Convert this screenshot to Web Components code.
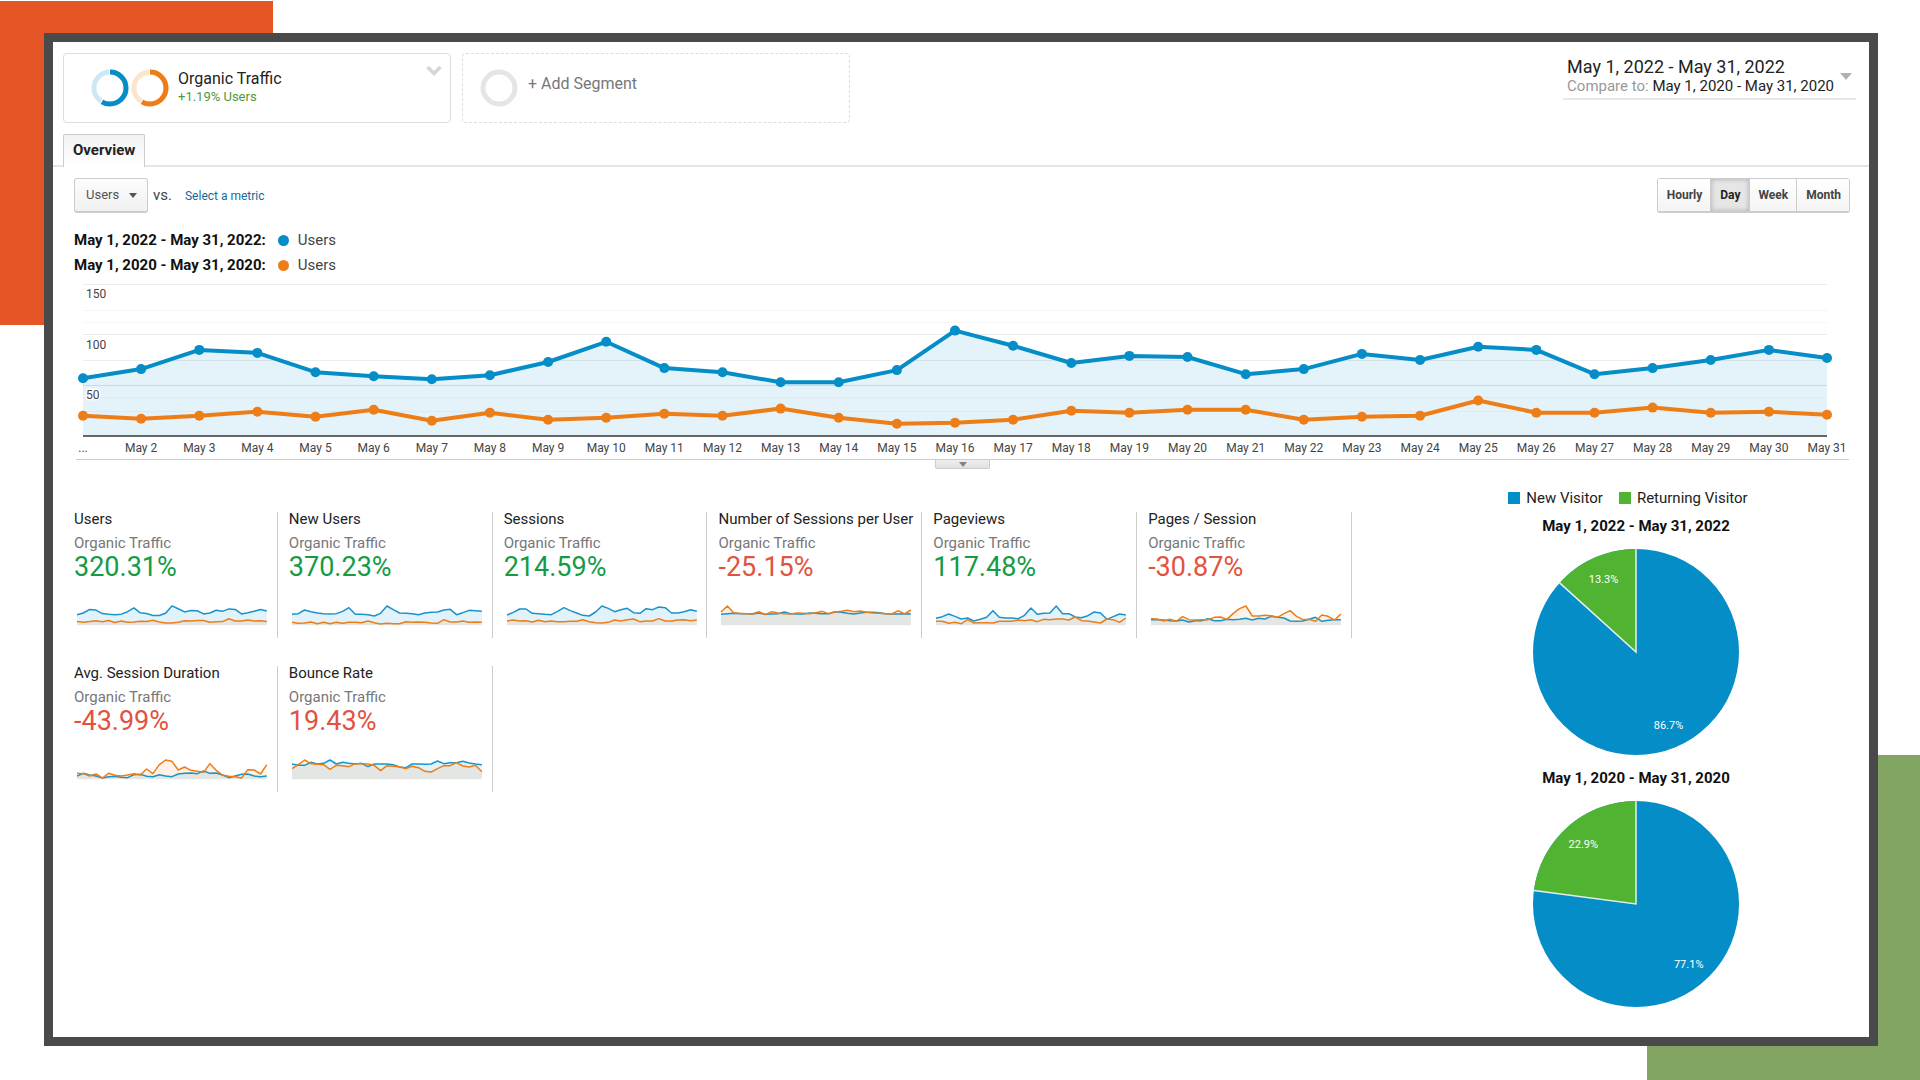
<!DOCTYPE html>
<html lang="en">
<head>
<meta charset="utf-8">
<meta name="viewport" content="width=device-width, initial-scale=1">
<title>Audience Overview</title>
<style>
  body { margin: 0; background: #fff; font-family: Roboto, "Liberation Sans", sans-serif; color: #222; }
</style>
</head>
<body>
<report-stage>
  <report-header>
    <segment-card name="Organic Traffic" detail="+1.19% Users"></segment-card>
    <add-segment></add-segment>
    <date-range slot="end" current="May 1, 2022 - May 31, 2022" previous="May 1, 2020 - May 31, 2020"></date-range>
  </report-header>
  <tab-bar label="Overview"></tab-bar>
  <metric-controls></metric-controls>
  <series-legend></series-legend>
  <trend-chart></trend-chart>
  <report-body>
    <metric-grid></metric-grid>
    <visitor-split slot="side"></visitor-split>
  </report-body>
</report-stage>

<script>
const BLUE = '#058dc7', ORANGE = '#ed7e17', GREEN = '#50b432';

const users2022 = [57,66,85,82,63,59,56,60,73,93,67,63,53,53,65,104,89,72,79,78,61,66,81,75,88,85,61,67,75,85,77];
const users2020 = [20,17,20,24,19,26,15,23,16,18,22,20,27,18,12,13,16,25,23,26,26,16,19,20,35,23,23,28,23,24,21];

// Sparkline series are levels counted down from the top; floor is the level of the zero line.
const metrics = [
  { name: 'Users', value: '320.31%', good: true, floor: 0,
    a: users2022.map(v => -v * 0.56), b: users2020.map(v => -v * 0.56) },
  { name: 'New Users', value: '370.23%', good: true, floor: 408,
    a: [375,373,362,367,371,373,374,373,366,355,375,375,376,380,372,350,361,371,372,373,376,371,369,368,362,360,376,370,363,364,366],
    b: [399,402,401,398,403,399,403,399,402,399,399,400,395,400,404,402,403,403,397,399,398,399,401,402,391,398,398,395,399,398,399] },
  { name: 'Sessions', value: '214.59%', good: true, floor: 408,
    a: [377,369,359,359,372,373,375,376,366,355,364,371,378,380,368,350,357,367,361,357,370,372,358,361,353,355,371,371,367,361,366],
    b: [395,392,395,394,398,393,397,395,397,397,396,396,391,397,400,401,399,392,395,391,389,397,395,395,388,395,395,392,391,394,392] },
  { name: 'Number of Sessions per User', value: '-25.15%', good: false, floor: 408,
    a: [375,373,372,373,373,374,371,375,374,373,368,373,374,374,371,372,373,373,367,369,372,374,371,369,369,370,373,374,374,373,374],
    b: [368,350,370,372,373,373,367,376,367,371,373,374,371,372,373,370,366,373,368,366,363,367,365,369,371,372,373,374,364,374,362] },
  { name: 'Pageviews', value: '117.48%', good: true, floor: 408,
    a: [387,382,374,381,389,386,395,390,384,364,384,386,386,388,378,356,375,372,371,350,373,373,383,385,379,368,371,390,382,374,377],
    b: [396,396,402,399,403,391,401,400,400,401,396,396,396,392,394,391,397,390,391,389,389,392,383,394,395,398,401,389,391,399,386] },
  { name: 'Pages / Session', value: '-30.87%', good: false, floor: 408,
    a: [391,391,392,394,395,392,398,394,394,388,394,394,390,391,390,387,392,387,389,381,384,386,395,396,395,390,384,396,393,391,391],
    b: [388,389,395,390,396,382,391,392,391,391,384,383,390,372,358,350,380,380,378,379,384,373,364,381,391,390,396,377,381,392,374] },
  { name: 'Avg. Session Duration', value: '-43.99%', good: false, floor: 870,
    a: [860,852,857,860,866,862,861,864,865,856,855,861,862,856,860,862,854,852,851,853,845,852,851,857,865,860,855,854,860,862,860],
    b: [852,853,860,854,866,852,858,860,857,853,857,839,853,826,812,816,842,833,843,846,849,823,843,857,861,862,866,841,842,854,826] },
  { name: 'Bounce Rate', value: '19.43%', good: false, floor: 870,
    a: [824,828,828,819,824,822,812,824,819,822,824,822,832,824,824,824,826,833,835,824,824,825,824,815,823,820,820,816,821,824,826],
    b: [838,826,812,823,825,826,840,828,829,832,823,823,824,828,844,829,831,832,838,831,835,846,848,838,829,829,820,830,833,828,847] }
];

class Base extends HTMLElement {
  connectedCallback() {
    if (!this.shadowRoot) this.attachShadow({ mode: 'open' }).innerHTML = this.view();
    this.ready();
  }
  ready() {}
}

customElements.define('report-stage', class extends Base {
  view() { return `
    <style>
      :host { display: flow-root; min-height: 100vh; box-sizing: border-box;
        background:
          linear-gradient(#e65525, #e65525) 0 1px / 273px 324px no-repeat,
          linear-gradient(#83a563, #83a563) 100% 100% / 273px 325px no-repeat,
          #fff; }
      main { margin: 33px 42px 34px 44px; min-height: calc(100vh - 67px); box-sizing: border-box;
        border: 9px solid #4a4a4b; background: #fff; }
    </style>
    <main><slot></slot></main>`; }
});

customElements.define('report-header', class extends Base {
  view() { return `
    <style>
      :host { display: flex; justify-content: space-between; align-items: flex-start; padding: 11px 13px 11px 10px; }
      .segments { display: flex; gap: 11px; }
    </style>
    <div class="segments"><slot></slot></div>
    <slot name="end"></slot>`; }
});

const ring = (light, dark) => `
  <svg width="38" height="38" viewBox="0 0 38 38" fill="none" stroke-width="5" aria-hidden="true">
    <circle cx="19" cy="19" r="16" stroke="${light}"/>
    <circle cx="19" cy="19" r="16" stroke="${dark}" pathLength="100" stroke-dasharray="58.5 100" transform="rotate(-90 19 19)"/>
    <path d="M18.500 0v6M8 36l4-6" stroke="#fff" stroke-width="1"/>
  </svg>`;

customElements.define('segment-card', class extends Base {
  view() { return `
    <style>
      :host { display: flex; box-sizing: border-box; width: 388px; height: 70px; padding: 0 8px 0 27px;
        border: 1px solid #ddd; border-radius: 4px; align-items: center; }
      .rings { display: flex; gap: 2px; }
      .text { flex: 1; padding: 0 0 2px 9px; }
      .name { font-size: 16px; line-height: 20px; }
      .detail { font-size: 13px; line-height: 16px; color: #4d9a3c; }
      button { align-self: flex-start; margin: 11px 0 0; padding: 0; border: 0; background: none; }
      svg { display: block; }
    </style>
    <div class="rings">${ring('#cce8f5', BLUE)}${ring('#fbe6cb', ORANGE)}</div>
    <div class="text">
      <div class="name">${this.getAttribute('name')}</div>
      <div class="detail">${this.getAttribute('detail')}</div>
    </div>
    <button type="button" aria-label="Segment options">
      <svg width="16" height="12" viewBox="0 0 16 12"><path d="M1.500 2L8 8.500 14.500 2" fill="none" stroke="#d6d6d6" stroke-width="3.500"/></svg>
    </button>`; }
});

customElements.define('add-segment', class extends Base {
  view() { return `
    <style>
      :host { display: block; }
      button { display: flex; box-sizing: border-box; width: 388px; height: 70px; margin: 0; padding: 0 0 0 17px;
        border: 1px dashed #ddd; border-radius: 4px; background: #fff; align-items: center; gap: 10px;
        font: 16px/20px Roboto, "Liberation Sans", sans-serif; color: #777; }
      span { padding-bottom: 8px; }
    </style>
    <button type="button">
      <svg width="38" height="38" viewBox="0 0 38 38" aria-hidden="true"><circle cx="19" cy="19" r="16" fill="none" stroke="#e5e5e5" stroke-width="5"/></svg>
      <span>+ Add Segment</span>
    </button>`; }
});

customElements.define('date-range', class extends Base {
  view() { return `
    <style>
      :host { display: block; }
      button { display: flex; align-items: center; gap: 6px; margin: 0; padding: 3px 4px; border: 0;
        border-bottom: 2px solid #e8e8e8; background: none; text-align: left;
        font-family: Roboto, "Liberation Sans", sans-serif; color: #222; }
      .current { display: block; font-size: 18px; line-height: 21px; }
      .previous { display: block; font-size: 15px; line-height: 18px; }
      i { font-style: normal; color: #999; }
    </style>
    <button type="button">
      <span>
        <span class="current">${this.getAttribute('current')}</span>
        <span class="previous"><i>Compare to:</i> ${this.getAttribute('previous')}</span>
      </span>
      <svg width="12" height="9" viewBox="0 0 12 9" aria-hidden="true"><path d="M0 2h12L6 9z" fill="#b3b0b3"/></svg>
    </button>`; }
});

customElements.define('tab-bar', class extends Base {
  view() { return `
    <style>
      :host { display: flex; padding-left: 10px; border-bottom: 2px solid #e5e5e5; }
      button { margin: 0 0 -2px; height: 33px; padding: 0 9px 2px; border: 1px solid #ccc; border-bottom: 0;
        border-radius: 2px 2px 0 0; background: linear-gradient(#f2f2f2, #fff);
        font: bold 15px/20px Roboto, "Liberation Sans", sans-serif; color: #222; }
    </style>
    <button type="button" role="tab" aria-selected="true">${this.getAttribute('label')}</button>`; }
});

customElements.define('metric-controls', class extends Base {
  view() { return `
    <style>
      :host { display: flex; justify-content: space-between; align-items: center; padding: 11px 19px 15px 21px;
        font-size: 12px; line-height: 16px; }
      .pick { display: flex; align-items: center; }
      .drop { display: grid; align-items: center; }
      .drop > * { grid-area: 1 / 1; }
      .drop svg { justify-self: end; margin-right: 11px; pointer-events: none; }
      select { appearance: none; width: 74px; height: 35px; margin: 0; padding: 0 0 0 11px; border: 1px solid #ccc;
        border-bottom-width: 2px; border-radius: 3px; background: linear-gradient(#fcfcfc, #f1f1f1);
        font: 13px/16px Roboto, "Liberation Sans", sans-serif; color: #555; }
      .vs { margin: 0 13px 0 5px; padding-bottom: 2px; font-size: 15px; color: #444; }
      a { color: #15699c; text-decoration: none; }
      .period { display: flex; border: 1px solid #ccc; border-bottom-width: 2px; border-radius: 3px; }
      button { height: 32px; margin: 0; padding: 0 8px 0 9px; border: 0; border-left: 1px solid #ccc;
        background: linear-gradient(#fff, #f4f4f4); font: bold 12px/16px Roboto, "Liberation Sans", sans-serif; color: #444; }
      button:first-child { border-left: 0; }
      button[aria-pressed=true] { background: #e6e6e6; box-shadow: inset 0 0 5px #aaa; color: #222; }
    </style>
    <div class="pick">
      <div class="drop">
        <select aria-label="Metric"><option>Users</option></select>
        <svg width="8" height="5" viewBox="0 0 8 5" aria-hidden="true"><path d="M0 0h8L4 5z" fill="#555"/></svg>
      </div>
      <span class="vs">vs.</span>
      <a href="#metric">Select a metric</a>
    </div>
    <div class="period" role="group" aria-label="Period">
      <button type="button">Hourly</button><button type="button" aria-pressed="true">Day</button><button type="button">Week</button><button type="button">Month</button>
    </div>`; }
});

customElements.define('series-legend', class extends Base {
  view() {
    const row = (range, color) => `<div><b>${range}:</b><i style="background:${color}"></i><span>Users</span></div>`;
    return `
    <style>
      :host { display: block; padding: 0 21px; font-size: 15px; line-height: 25px; }
      div { display: flex; align-items: center; }
      b { color: #111; }
      i { width: 11px; height: 11px; margin: 0 9px 0 12px; border-radius: 50%; }
      span { color: #444; }
    </style>
    ${row('May 1, 2022 - May 31, 2022', BLUE)}
    ${row('May 1, 2020 - May 31, 2020', ORANGE)}`; }
});

customElements.define('trend-chart', class extends Base {
  view() { return `
    <style>
      :host { display: block; padding: 0 20px 0 23px; }
      .plot { height: 181px; border-bottom: 1px solid #ccc; }
      svg { display: block; width: 100%; height: 181px; overflow: visible; }
      text { font: 12px Roboto, "Liberation Sans", sans-serif; fill: #444; }
      button { display: flex; box-sizing: border-box; width: 55px; height: 9px; margin: 0 auto; padding: 0; border: 1px solid #ccc;
        border-top: 0; border-radius: 0 0 2px 2px; background: linear-gradient(#eee, #e2e2e2); justify-content: center; align-items: center; }
      button svg { width: 8px; height: 5px; }
    </style>
    <div class="plot"></div>
    <button type="button" aria-label="Collapse chart"><svg viewBox="0 0 8 5"><path d="M0 0h8L4 5z" fill="#8a8088"/></svg></button>`; }
  ready() { this.draw(); window.addEventListener('resize', () => this.draw()); }
  draw() {
    const box = this.shadowRoot.querySelector('.plot');
    const w = box.clientWidth, left = 7, right = w - 22, top = 6, zero = 158;
    const x = i => left + (right - left) * i / 30;
    const y = v => zero - (zero - top) * v / 150;
    const rule = (py, c) => `<path d="M${left} ${py + .5}H${right}" stroke="${c}"/>`;
    const pts = s => s.map((v, i) => `${x(i).toFixed(1)},${y(v).toFixed(1)}`).join(' ');
    const line = (s, c) => `<polyline points="${pts(s)}" fill="none" stroke="${c}" stroke-width="4" stroke-linejoin="round"/>` +
      s.map((v, i) => `<circle cx="${x(i).toFixed(1)}" cy="${y(v).toFixed(1)}" r="5" fill="${c}"/>`).join('');
    box.innerHTML = `<svg role="img" aria-label="Users per day">
      <polygon points="${left},${zero} ${pts(users2022)} ${right},${zero}" fill="#e4f2fa"/>
      ${rule(6, '#ececec')}${rule(32, '#f6f6f6')}${rule(44, '#f6f6f6')}${rule(56, '#ececec')}
      ${rule(82, 'rgba(0,0,0,.07)')}${rule(107, 'rgba(0,0,0,.1)')}${rule(119, 'rgba(0,0,0,.03)')}${rule(133, 'rgba(0,0,0,.03)')}
      <path d="M${left} ${zero}H${right}" stroke="#666" stroke-width="2"/>
      ${line(users2022, BLUE)}${line(users2020, ORANGE)}
      <text x="${left + 3}" y="20">150</text><text x="${left + 3}" y="71">100</text>
      <text x="${left + 3}" y="121" stroke="#fff" stroke-width="3" paint-order="stroke">50</text>
      ${users2022.map((v, i) => `<text x="${x(i).toFixed(1)}" y="174" text-anchor="middle">${i ? 'May ' + (i + 1) : '...'}</text>`).join('')}
    </svg>`;
  }
});

customElements.define('report-body', class extends Base {
  view() { return `
    <style>
      :host { display: flex; align-items: flex-start; gap: 72px; padding: 17px 21px 16px; }
      .main { flex: 1; padding-top: 26px; }
      .side { width: 424px; }
    </style>
    <div class="main"><slot></slot></div>
    <aside class="side"><slot name="side"></slot></aside>`; }
});

customElements.define('metric-grid', class extends Base {
  view() { return `
    <style>
      :host { display: grid; grid-template-columns: repeat(6, minmax(0, 1fr)); gap: 28px 11px; }
    </style>
    ${metrics.map((m, i) => `<metric-card index="${i}"></metric-card>`).join('')}`; }
});

customElements.define('metric-card', class extends Base {
  view() {
    const m = metrics[this.getAttribute('index')];
    const pts = s => s.map((v, i) => `${i * 19},${(64 - (m.floor - v)).toFixed(1)}`).join(' ');
    const area = (s, c) => `<polygon points="0,64 ${pts(s)} 570,64" fill="${c}"/>`;
    const line = (s, c) => `<polyline points="${pts(s)}" fill="none" stroke="${c}" stroke-width="1.500" stroke-linejoin="round" vector-effect="non-scaling-stroke"/>`;
    return `
    <style>
      :host { display: flex; flex-direction: column; box-sizing: border-box; height: 126px; padding-right: 10px;
        border-right: 1px solid #ccc; }
      .name { font-size: 15px; line-height: 14px; white-space: nowrap; }
      .segment { margin-top: 10px; font-size: 15px; line-height: 14px; color: #777; }
      .value { margin-top: 3px; font-size: 27px; line-height: 28px; color: ${m.good ? '#149b45' : '#e2533f'}; }
      svg { display: block; width: calc(100% - 3px); height: 22px; margin: 23px 0 0 3px; overflow: visible; }
    </style>
    <div class="name">${m.name}</div>
    <div class="segment">Organic Traffic</div>
    <div class="value">${m.value}</div>
    <svg viewBox="0 0 570 66" preserveAspectRatio="none" aria-hidden="true">
      ${area(m.a, '#e2f2fa')}${area(m.b, 'rgba(237,126,23,.10)')}${line(m.a, '#1a93cb')}${line(m.b, ORANGE)}
    </svg>`; }
});

customElements.define('visitor-split', class extends Base {
  view() { return `
    <style>
      :host { display: flex; flex-direction: column; align-items: center; font-size: 15px; line-height: 24px; }
      .legend { display: flex; gap: 16px; margin-bottom: 4px; padding-right: 16px; }
      .legend span { display: flex; align-items: center; gap: 6px; }
      i { width: 12px; height: 12px; }
    </style>
    <div class="legend"><span><i style="background:${BLUE}"></i>New Visitor</span><span><i style="background:${GREEN}"></i>Returning Visitor</span></div>
    <pie-chart caption="May 1, 2022 - May 31, 2022" share="86.7" rest="13.3"></pie-chart>
    <pie-chart caption="May 1, 2020 - May 31, 2020" share="77.1" rest="22.9"></pie-chart>`; }
});

customElements.define('pie-chart', class extends Base {
  view() {
    const share = +this.getAttribute('share'), rest = +this.getAttribute('rest'), r = 103;
    const at = (pct, d) => {
      const t = pct / 100 * 2 * Math.PI;
      return [(r + d * Math.sin(t)).toFixed(1), (r - d * Math.cos(t)).toFixed(1)];
    };
    const edge = at(share, r), near = at(share / 2, 80), far = at(share + rest / 2, 80);
    const label = (p, t) => `<text x="${p[0]}" y="${+p[1] + 4}" text-anchor="middle">${t}%</text>`;
    return `
    <style>
      :host { display: flex; flex-direction: column; align-items: center; gap: 11px; margin-bottom: 11px; }
      b { color: #111; }
      svg { display: block; }
      text { font: 11px Roboto, "Liberation Sans", sans-serif; fill: #fff; }
    </style>
    <b>${this.getAttribute('caption')}</b>
    <svg width="206" height="206" viewBox="0 0 206 206" role="img" aria-label="${this.getAttribute('caption')}">
      <circle cx="${r}" cy="${r}" r="${r}" fill="${BLUE}"/>
      <path d="M${r} ${r}L${edge}A${r} ${r} 0 0 1 ${r} 0Z" fill="${GREEN}"/>
      <path d="M${edge}L${r} ${r}V0" fill="none" stroke="#e4f0ee" stroke-width="1.500"/>
      ${label(near, share)}${label(far, rest)}
    </svg>`; }
});
</script>
</body>
</html>
